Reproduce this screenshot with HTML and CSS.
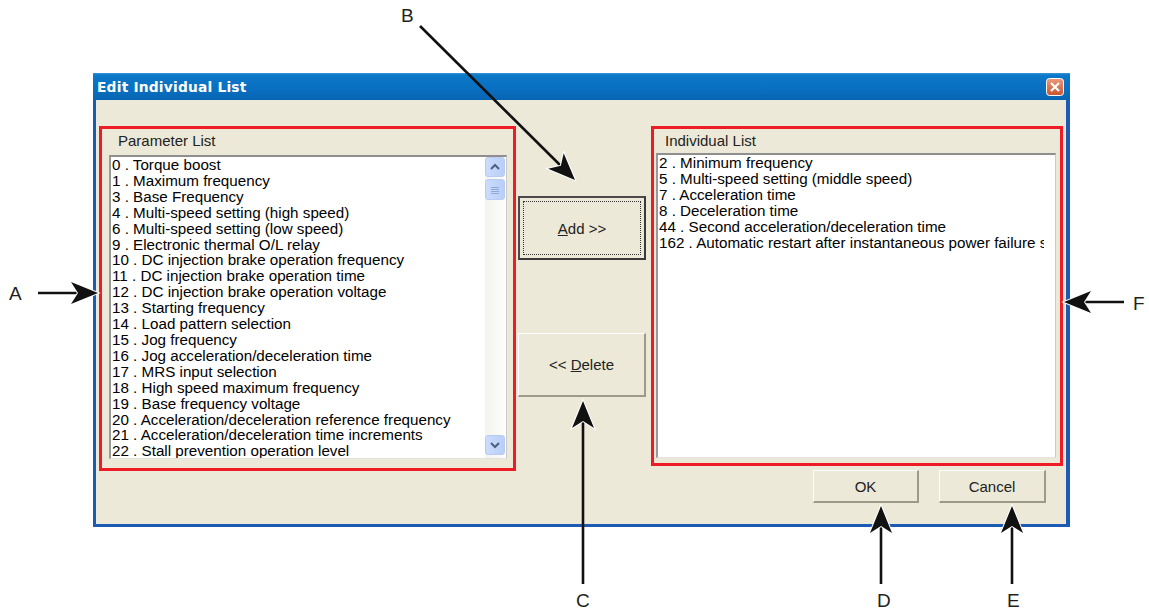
FILE: index.html
```html
<!DOCTYPE html>
<html lang="en">
<head>
  <meta charset="UTF-8">
  <title>Edit Individual List</title>
  <link rel="stylesheet" href="styles.css">
</head>
<body>
  <div class="window">
    <div class="titlebar">
      <span class="title">Edit Individual List</span>
      <svg class="close" width="18" height="18" viewBox="0 0 18 18">
        <defs>
          <linearGradient id="closeFill" x1="0" y1="0" x2="0" y2="1">
            <stop offset="0" stop-color="#ec9a7c"/>
            <stop offset="1" stop-color="#c9552f"/>
          </linearGradient>
        </defs>
        <rect x="0.5" y="0.5" width="17" height="17" rx="3" fill="url(#closeFill)" stroke="#fff"/>
        <path d="M5 5 L13 13 M13 5 L5 13" stroke="#fff" stroke-width="2.2"/>
      </svg>
    </div>

    <div class="client">
      <section class="group group-param">
        <div class="group-label">Parameter List</div>
        <div class="listbox">
          <ul class="items">
            <li>0 . Torque boost</li>
            <li>1 . Maximum frequency</li>
            <li>3 . Base Frequency</li>
            <li>4 . Multi-speed setting (high speed)</li>
            <li>6 . Multi-speed setting (low speed)</li>
            <li>9 . Electronic thermal O/L relay</li>
            <li>10 . DC injection brake operation frequency</li>
            <li>11 . DC injection brake operation time</li>
            <li>12 . DC injection brake operation voltage</li>
            <li>13 . Starting frequency</li>
            <li>14 . Load pattern selection</li>
            <li>15 . Jog frequency</li>
            <li>16 . Jog acceleration/deceleration time</li>
            <li>17 . MRS input selection</li>
            <li>18 . High speed maximum frequency</li>
            <li>19 . Base frequency voltage</li>
            <li>20 . Acceleration/deceleration reference frequency</li>
            <li>21 . Acceleration/deceleration time increments</li>
            <li>22 . Stall prevention operation level</li>
          </ul>
          <div class="scrollbar">
            <div class="sb-btn">
              <svg width="10" height="8" viewBox="0 0 10 8"><path d="M1 6 L5 2 L9 6" fill="none" stroke="#4d6185" stroke-width="2"/></svg>
            </div>
            <div class="sb-thumb">
              <svg width="8" height="8" viewBox="0 0 8 8"><path d="M0 1.5H8M0 3.5H8M0 5.5H8M0 7.5H8" stroke="#8fa9dd" stroke-width="1"/></svg>
            </div>
            <div class="sb-track"></div>
            <div class="sb-btn">
              <svg width="10" height="8" viewBox="0 0 10 8"><path d="M1 2 L5 6 L9 2" fill="none" stroke="#4d6185" stroke-width="2"/></svg>
            </div>
          </div>
        </div>
      </section>

      <div class="middle">
        <button class="btn btn-big btn-default"><span class="focus"><u>A</u>dd &gt;&gt;</span></button>
        <button class="btn btn-big btn-delete">&lt;&lt; <u>D</u>elete</button>
      </div>

      <div class="right-col">
        <section class="group group-indiv">
          <div class="group-label">Individual List</div>
          <div class="listbox">
            <ul class="items">
              <li>2 . Minimum frequency</li>
              <li>5 . Multi-speed setting (middle speed)</li>
              <li>7 . Acceleration time</li>
              <li>8 . Deceleration time</li>
              <li>44 . Second acceleration/deceleration time</li>
              <li>162 . Automatic restart after instantaneous power failure selection</li>
            </ul>
          </div>
        </section>
        <div class="actions">
          <button class="btn btn-small btn-ok">OK</button>
          <button class="btn btn-small btn-cancel">Cancel</button>
        </div>
      </div>
    </div>
  </div>

  <!-- callout letters and arrows drawn over the screenshot -->
  <svg class="callouts" width="1149" height="612" viewBox="0 0 1149 612">
    <defs>
      <path id="head" d="M0 0 L-27 -11 L-20 0 L-27 11 Z"/>
    </defs>
    <g class="arrow-lines">
      <line x1="38" y1="293" x2="80" y2="293"/>
      <line x1="420" y1="26" x2="560" y2="165"/>
      <line x1="583" y1="584" x2="583" y2="420"/>
      <line x1="881" y1="584" x2="881" y2="525"/>
      <line x1="1012" y1="584" x2="1012" y2="525"/>
      <line x1="1124" y1="302" x2="1082" y2="302"/>
    </g>
    <g class="arrow-heads">
      <use href="#head" transform="translate(98 293)"/>
      <use href="#head" transform="translate(575 180) rotate(45)"/>
      <use href="#head" transform="translate(583 401) rotate(-90)"/>
      <use href="#head" transform="translate(881 506) rotate(-90)"/>
      <use href="#head" transform="translate(1012 506) rotate(-90)"/>
      <use href="#head" transform="translate(1064 302) rotate(180)"/>
    </g>
    <g class="letters">
      <text x="9" y="300">A</text>
      <text x="401" y="22">B</text>
      <text x="576" y="607">C</text>
      <text x="877" y="607">D</text>
      <text x="1007" y="607">E</text>
      <text x="1133" y="310">F</text>
    </g>
  </svg>
</body>
</html>
```

FILE: styles.css
```css
body {
  margin: 0;
  width: 1149px;
  height: 612px;
  padding: 73px 0 0 93px;
  box-sizing: border-box;
  background-color: #fff;
  font-family: "Liberation Sans", Arial, sans-serif;
  position: relative;
  overflow: hidden;
}

.window {
  width: 977px;
  height: 454px;
  box-sizing: border-box;
  padding: 0 4px 3px 3px;
  background-color: #1c5bb4;
  display: flex;
  flex-direction: column;
}

.titlebar {
  height: 27px;
  margin: 0 -4px 0 -3px;
  padding: 0 6px 0 4px;
  display: flex;
  align-items: center;
  justify-content: space-between;
  background: linear-gradient(#3a96da 0, #0c78c8 2px, #0a6fc0 60%, #0764b2 100%);
}

.title {
  color: #fff;
  font-family: "DejaVu Sans", sans-serif;
  font-weight: bold;
  font-size: 13.8px;
  letter-spacing: 0.2px;
}

.client {
  flex: 1;
  background-color: #ece9d8;
  padding: 26px 3px 0 3px;
  display: flex;
  align-items: flex-start;
}

.group {
  box-sizing: border-box;
  border: 3px solid #ee1c25;
  display: flex;
  flex-direction: column;
}

.group-label {
  font-size: 15px;
  line-height: 16px;
  color: #222;
}

.group-param {
  width: 417px;
  height: 345px;
  padding: 4px 6px 0 7px;
}

.group-param .group-label {
  padding-left: 9px;
  margin-bottom: 6px;
}

.group-indiv {
  width: 412px;
  height: 340px;
  padding: 4px 4px 0 2px;
}

.group-indiv .group-label {
  padding-left: 9px;
  margin-bottom: 4px;
}

.listbox {
  background-color: #fff;
  border-top: 2px solid #8f8f8f;
  border-left: 2px solid #9a9a9a;
  border-right: 1px solid #c9c9c9;
  border-bottom: 1px solid #e2e2e2;
  display: flex;
}

.group-param .listbox {
  height: 304px;
  box-sizing: border-box;
}

.group-indiv .listbox {
  height: 305px;
  box-sizing: border-box;
}

.items {
  list-style: none;
  margin: 0 11px 0 0;
  padding: 0 0 0 1px;
  flex: 1;
  overflow: hidden;
  font-size: 15.2px;
  line-height: 15.9px;
  color: #000;
}

.items li {
  white-space: nowrap;
}

.scrollbar {
  width: 20px;
  margin: 0 1px 0 0;
  padding-bottom: 3px;
  display: flex;
  flex-direction: column;
  gap: 2px;
  background: linear-gradient(90deg, #f3f3ef, #fdfdfb);
}

.sb-btn,
.sb-thumb {
  height: 20px;
  box-sizing: border-box;
  border: 1px solid #b7cbf3;
  border-radius: 3px;
  background: linear-gradient(90deg, #cbdcfc, #b9cff8);
  display: flex;
  align-items: center;
  justify-content: center;
}

.sb-thumb {
  height: 21px;
}

.sb-track {
  flex: 1;
}

.middle {
  width: 128px;
  margin-left: 2px;
  padding-top: 70px;
  display: flex;
  flex-direction: column;
}

.btn {
  font-family: "Liberation Sans", Arial, sans-serif;
  font-size: 15px;
  color: #222;
  background-color: #ece9d8;
  border-top: 1px solid #fff;
  border-left: 1px solid #fff;
  border-right: 2px solid #9d9a8c;
  border-bottom: 2px solid #9d9a8c;
  padding: 0;
  box-sizing: border-box;
}

.btn-big {
  width: 128px;
  height: 64px;
}

.btn-default {
  border: 2px solid #4a4a4a;
  border-right-color: #3a3a3a;
  border-bottom-color: #3a3a3a;
  padding: 3px;
  display: flex;
}

.focus {
  flex: 1;
  border: 1px dotted #333;
  display: flex;
  align-items: center;
  justify-content: center;
}

.btn-delete {
  margin-top: 73px;
}

.right-col {
  width: 412px;
  margin-left: 5px;
  display: flex;
  flex-direction: column;
}

.actions {
  margin-top: 4px;
  padding-right: 17px;
  display: flex;
  justify-content: flex-end;
  gap: 20px;
}

.btn-small {
  height: 33px;
}

.btn-ok {
  width: 106px;
}

.btn-cancel {
  width: 107px;
}

.callouts {
  position: absolute;
  top: 0;
  left: 0;
  pointer-events: none;
}

.arrow-lines line {
  stroke: #111;
  stroke-width: 2.6;
}

.arrow-heads use {
  fill: #111;
  stroke: #fff;
  stroke-width: 2;
  paint-order: stroke;
}

.letters text {
  font-family: "Liberation Sans", Arial, sans-serif;
  font-size: 19px;
  fill: #231f20;
}
```
